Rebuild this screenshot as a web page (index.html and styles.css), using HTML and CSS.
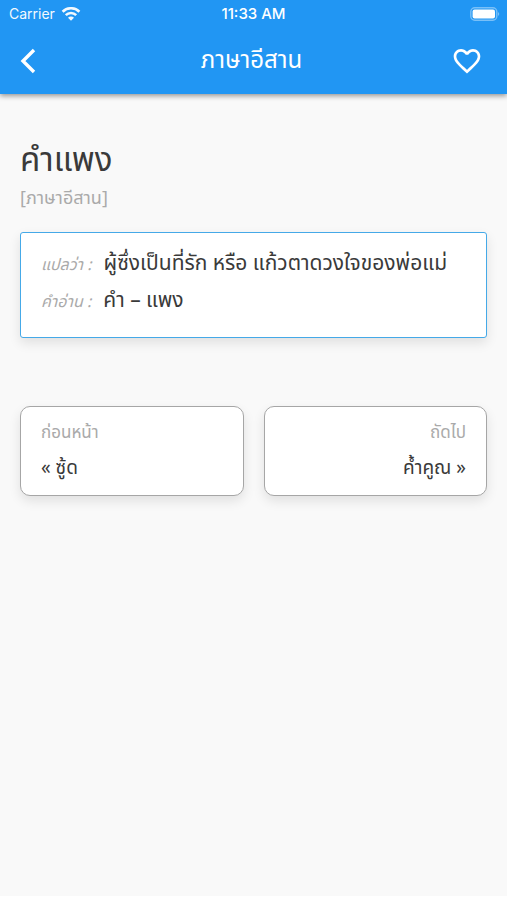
FILE: index.html
```html
<!DOCTYPE html>
<html lang="th">
  <head>
    <meta charset="UTF-8" />
    <meta name="viewport" content="width=device-width, initial-scale=1.0" />
    <title>ภาษาอีสาน</title>
    <link rel="stylesheet" href="styles.css">
  </head>
  <body>
    <header class="header">
      <div class="status-bar">
        <div class="carrier">
          <span>Carrier</span>
          <svg width="20" height="14" viewBox="0 0 20 14">
            <path d="M1.6 4.7 A12 12 0 0 1 18.4 4.7" />
            <path d="M4.8 8.1 A7.4 7.4 0 0 1 15.2 8.1" />
            <path class="wifi-dot" d="M10 13.8 L7 10.8 A4.2 4.2 0 0 1 13 10.8 Z" />
          </svg>
        </div>
        <span class="time">11:33 AM</span>
        <div class="battery">
          <svg width="30" height="14" viewBox="0 0 30 14">
            <rect class="battery-case" x="0.8" y="0.8" width="26" height="12.4" rx="4" />
            <rect class="battery-level" x="2.6" y="2.6" width="22.4" height="8.8" rx="2" />
            <path class="battery-tip" d="M28 5 Q30.5 7 28 9 Z" />
          </svg>
        </div>
      </div>
      <nav class="nav-bar">
        <button class="icon-button" aria-label="กลับ">
          <svg width="16" height="26" viewBox="0 0 16 26">
            <path d="M14 2 L3 13 L14 24" />
          </svg>
        </button>
        <h1>ภาษาอีสาน</h1>
        <button class="icon-button favorite" aria-label="รายการโปรด">
          <svg width="32" height="32" viewBox="0 0 24 24">
            <path class="heart" d="M16.5 3c-1.74 0-3.41.81-4.5 2.09C10.91 3.81 9.24 3 7.5 3 4.42 3 2 5.42 2 8.5c0 3.78 3.4 6.86 8.55 11.54L12 21.35l1.45-1.32C18.6 15.36 22 12.28 22 8.5 22 5.42 19.58 3 16.5 3zm-4.4 15.55l-.1.1-.1-.1C7.14 14.24 4 11.39 4 8.5 4 6.5 5.5 5 7.5 5c1.54 0 3.04.99 3.57 2.36h1.87C13.46 5.99 14.96 5 16.5 5c2 0 3.5 1.5 3.5 3.5 0 2.89-3.14 5.74-7.9 10.05z" />
          </svg>
        </button>
      </nav>
    </header>

    <main class="content">
      <h2>คำแพง</h2>
      <p class="language">[ภาษาอีสาน]</p>

      <dl class="meaning">
        <div class="row">
          <dt>แปลว่า :</dt>
          <dd>ผู้ซึ่งเป็นที่รัก หรือ แก้วตาดวงใจของพ่อแม่</dd>
        </div>
        <div class="row">
          <dt>คำอ่าน :</dt>
          <dd>คำ – แพง</dd>
        </div>
      </dl>

      <div class="pager">
        <a class="card" href="#">
          <span class="label">ก่อนหน้า</span>
          <span>« ซู้ด</span>
        </a>
        <a class="card next" href="#">
          <span class="label">ถัดไป</span>
          <span>ค้ำคูณ »</span>
        </a>
      </div>
    </main>
  </body>
</html>
```
FILE: styles.css
```css
html {
  background-color: white;
}
body {
  min-height: calc(100vh - 4px);
  margin: 0;
  font-family: "Noto Sans Thai", "Noto Sans", sans-serif;
  background-color: #f9f9f9;
  color: #3a3a3a;
}
h1,
h2,
p,
dl,
dd {
  margin: 0;
  font-weight: 400;
}
.header {
  background-color: #2196f3;
  color: white;
  box-shadow: 0 2px 5px rgba(0, 0, 0, 0.4);
}
.status-bar {
  display: grid;
  grid-template-columns: 1fr auto 1fr;
  align-items: center;
  height: 27px;
  padding: 0 7px;
  font-family: Inter, sans-serif;
  font-size: 14px;
}
.carrier {
  display: flex;
  align-items: center;
  gap: 6px;
  padding-left: 2px;
  opacity: 0.95;
}
.carrier svg {
  fill: none;
  stroke: white;
  stroke-width: 2.6;
}
.carrier .wifi-dot {
  fill: white;
  stroke: none;
}
.time {
  font-size: 15px;
  font-weight: 500;
}
.battery {
  display: flex;
  justify-content: flex-end;
}
.battery-case {
  fill: none;
  stroke: white;
  stroke-width: 1.4;
  opacity: 0.4;
}
.battery-level {
  fill: white;
}
.battery-tip {
  fill: white;
  opacity: 0.4;
}
.nav-bar {
  display: grid;
  grid-template-columns: 1fr auto 1fr;
  align-items: center;
  height: 67px;
  padding: 0 24px 0 20px;
}
.nav-bar h1 {
  font-size: 24px;
  line-height: 36px;
}
.icon-button {
  display: flex;
  justify-self: start;
  padding: 0;
  border: none;
  background: none;
  cursor: pointer;
}
.favorite {
  justify-self: end;
}
.icon-button svg {
  fill: none;
  stroke: white;
  stroke-width: 3.4;
}
.icon-button .heart {
  fill: white;
  stroke: none;
}
.content {
  padding: 41px 20px;
}
.content h2 {
  font-size: 33px;
  line-height: 52px;
}
.language {
  font-size: 18px;
  line-height: 24px;
  color: #aaa;
}
.meaning {
  margin-top: 21px;
  padding: 13px 20px 17px;
  border: 1px solid #45a9e8;
  border-radius: 3px;
  background-color: white;
  box-shadow: 0 5px 12px rgba(0, 0, 0, 0.1);
}
.row {
  display: flex;
  align-items: baseline;
  gap: 12px;
  line-height: 35px;
}
.row dt {
  font-size: 16px;
  font-style: italic;
  color: #aaa;
}
.row dd {
  font-size: 21px;
}
.pager {
  display: flex;
  gap: 20px;
  margin-top: 68px;
}
.card {
  display: flex;
  flex: 1;
  flex-direction: column;
  padding: 8px 20px;
  border: 1px solid #a6a6a6;
  border-radius: 10px;
  background-color: white;
  box-shadow: 0 5px 12px rgba(0, 0, 0, 0.1);
  color: #3a3a3a;
  font-size: 19px;
  line-height: 36px;
  text-decoration: none;
}
.next {
  text-align: right;
}
.label {
  font-size: 17px;
  color: #aaa;
}
```
